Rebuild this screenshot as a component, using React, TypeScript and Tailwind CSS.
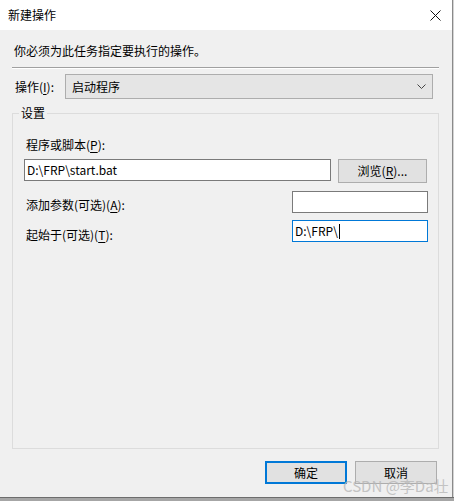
import React from 'react';

const font = { fontFamily: '"Noto Sans CJK SC", "Noto Sans", sans-serif' };

function Mn({ k }: { k: string }) {
  // mnemonic letter, underlined like Win32 dialogs
  return <u className="underline-offset-2">{k}</u>;
}

function TextBox({ value, focused, className }: { value?: string; focused?: boolean; className: string }) {
  return (
    <div
      className={`h-[22px] bg-white flex items-center pl-[2px] text-[12px] leading-[16px] ${
        focused ? 'border border-[#0078d7]' : 'border border-[#7a7a7a]'
      } ${className}`}
    >
      {value}
      {focused && <span className="inline-block w-px h-[15px] bg-black ml-px" />}
    </div>
  );
}

export default function App() {
  return (
    <div className="relative w-[454px] h-[501px] flex flex-col bg-[#a6a6a6] text-black" style={font}>
      <div className="flex h-[497px]">
        <div className="w-[452px] flex flex-col bg-[#f0f0f0]">
          {/* title bar */}
          <div className="h-[30px] bg-white flex items-center justify-between pl-[8px] pr-[11px] text-[12px]">
            <span>新建操作</span>
            <svg width="11" height="11" viewBox="0 0 11 11">
              <path d="M0.5 0.5 L10.5 10.5 M10.5 0.5 L0.5 10.5" stroke="#111" strokeWidth="1" />
            </svg>
          </div>

          <div className="pt-[13px] pl-[14px] text-[12px] leading-[16px]">你必须为此任务指定要执行的操作。</div>

          <div className="mt-[8px] ml-[12px] w-[427px]">
            <div className="h-px bg-[#a0a0a0]" />
            <div className="h-px bg-white" />
          </div>

          <div className="mt-[5px] flex items-center h-[25px] text-[12px]">
            <span className="w-[65px] pl-[15px]">
              操作(<Mn k="I" />):
            </span>
            <div className="w-[368px] h-[25px] bg-[#e5e5e5] border border-[#adadad] flex items-center justify-between pl-[6px] pr-[6px]">
              <span>启动程序</span>
              <svg width="9" height="6" viewBox="0 0 9 6">
                <path d="M0.5 0.5 L4.5 4.5 L8.5 0.5" stroke="#444" fill="none" strokeWidth="1" />
              </svg>
            </div>
          </div>

          <fieldset className="mt-[6px] ml-[12px] w-[427px] h-[344px] border border-[#dcdcdc] text-[12px] leading-[16px]">
            <legend className="ml-[6px] px-[2px]">设置</legend>

            <div className="mt-[16px] pl-[13px]">
              程序或脚本(<Mn k="P" />):
            </div>
            <div className="mt-[6px] flex items-start pl-[11px]">
              <TextBox value="D:\FRP\start.bat" className="w-[307px]" />
              <button className="ml-[7px] w-[89px] h-[24px] bg-[#e1e1e1] border border-[#adadad] text-[12px]">
                浏览(<Mn k="R" />)...
              </button>
            </div>

            <div className="mt-[8px] flex items-start pl-[13px]">
              <span className="w-[266px] mt-[6px]">
                添加参数(可选)(<Mn k="A" />):
              </span>
              <TextBox className="w-[136px]" />
            </div>

            <div className="mt-[7px] flex items-start pl-[13px]">
              <span className="w-[266px] mt-[7px]">
                起始于(可选)(<Mn k="T" />):
              </span>
              <TextBox value="D:\FRP\" focused className="w-[136px]" />
            </div>
          </fieldset>

          <div className="mt-[12px] flex justify-end gap-[8px] pr-[15px] text-[12px]">
            <button className="w-[82px] h-[23px] bg-[#e1e1e1] border-2 border-[#0078d7]">确定</button>
            <button className="w-[82px] h-[23px] bg-[#e1e1e1] border border-[#adadad]">取消</button>
          </div>
        </div>
        <div className="w-px bg-[#8a8a8a]" />
        <div className="w-px bg-[#d4d4d4]" />
      </div>
      <div className="h-px bg-[#6d6d6d]" />

      {/* CSDN watermark */}
      <div className="absolute left-[343px] top-[477px] text-[15px] leading-[18px] text-[#b8b8b8] opacity-80 whitespace-nowrap">
        CSDN @李Da壮
      </div>
    </div>
  );
}
